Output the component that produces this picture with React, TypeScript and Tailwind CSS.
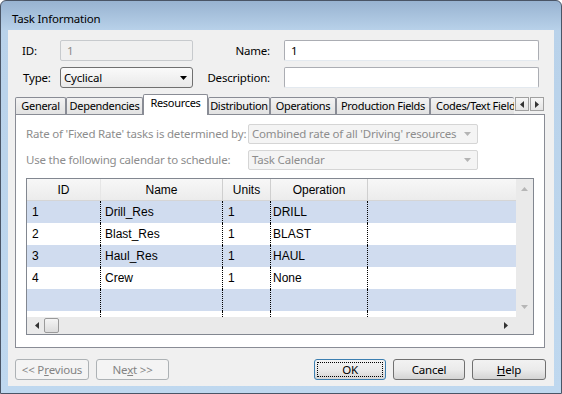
const ui = "font-['Noto_Sans',sans-serif] text-[11.5px] tracking-[-0.2px]";
const gridFont = "font-['Liberation_Sans',Arial,sans-serif] text-[12px] tracking-normal";

const rows = [
  { id: "1", name: "Drill_Res", units: "1", op: "DRILL" },
  { id: "2", name: "Blast_Res", units: "1", op: "BLAST" },
  { id: "3", name: "Haul_Res", units: "1", op: "HAUL" },
  { id: "4", name: "Crew", units: "1", op: "None" },
  { id: "", name: "", units: "", op: "" },
];

const tabs = [
  { label: "General", w: "w-[51px]" },
  { label: "Dependencies", w: "w-[77px]" },
  { label: "Resources", w: "w-[65px]", active: true },
  { label: "Distribution", w: "w-[62px]" },
  { label: "Operations", w: "w-[66px]" },
  { label: "Production Fields", w: "w-[94px]" },
  { label: "Codes/Text Fields", w: "w-[84px]", clip: true },
];

function Tab({ label, w, active, clip }: { label: string; w: string; active?: boolean; clip?: boolean }) {
  if (active) {
    return (
      <div className={`relative z-10 -mb-px h-[21px] ${w} shrink-0 whitespace-nowrap rounded-t-[2px] border border-b-0 border-[#898c95] bg-white text-center text-[11px] leading-[16px] tracking-[-0.3px]`}>
        {label}
      </div>
    );
  }
  return (
    <div className={`h-[17px] ${w} shrink-0 overflow-hidden whitespace-nowrap rounded-t-[2px] border border-b-0 border-[#898c95] bg-gradient-to-b from-[#f3f3f3] to-[#e2e2e2] text-[11px] leading-[15px] tracking-[-0.3px] ${clip ? "border-r-0 pl-[5px]" : "text-center"}`}>
      {label}
    </div>
  );
}

function Arrow({ dir, color }: { dir: "up" | "down" | "left" | "right"; color: string }) {
  const pts = {
    up: "0,4 7,4 3.5,0",
    down: "0,0 7,0 3.5,4",
    left: "4,0 4,7 0,3.5",
    right: "0,0 0,7 4,3.5",
  }[dir];
  const horiz = dir === "left" || dir === "right";
  return (
    <svg width={horiz ? 4 : 7} height={horiz ? 7 : 4} viewBox={horiz ? "0 0 4 7" : "0 0 7 4"}>
      <polygon points={pts} fill={color} />
    </svg>
  );
}

function Button({ children, w, disabled, primary }: { children: React.ReactNode; w: string; disabled?: boolean; primary?: boolean }) {
  if (disabled) {
    return (
      <div className={`flex h-[21px] ${w} items-center justify-center rounded-[3px] border border-[#adb2b5] bg-[#f4f4f4] text-[#838383]`}>
        {children}
      </div>
    );
  }
  return (
    <div className={`flex h-[21px] ${w} items-center justify-center rounded-[3px] border ${primary ? "border-[#3c7fb1]" : "border-[#707070]"} bg-gradient-to-b from-[#f2f2f2] via-[#ebebeb] to-[#d4d4d4] p-[2px]`}>
      <div className={`flex h-full w-full items-center justify-center ${primary ? "border border-dotted border-black" : ""}`}>
        {children}
      </div>
    </div>
  );
}

function DisabledCombo({ text }: { text: string }) {
  return (
    <div className="flex h-[20px] w-[230px] shrink-0 items-center justify-between rounded-[2px] border border-[#d5d5d5] bg-[#f4f4f4] pl-[3px] pr-[6px] text-[#8d8d8d]">
      <span className="whitespace-nowrap">{text}</span>
      <Arrow dir="down" color="#b4b4b4" />
    </div>
  );
}

export default function App() {
  return (
    <div className={`${ui} h-[394px] w-[562px] overflow-hidden bg-white text-black`}>
      <div className="flex h-[394px] w-[562px] flex-col rounded-t-[6px] border border-[#4a5566] bg-[linear-gradient(to_bottom,#98b3d1_0px,#b9d2ea_30px,#bfd8ef_100%)]">
        {/* title */}
        <div className="flex h-[29px] shrink-0 items-center pl-[11px] pt-[6px]">Task Information</div>

        {/* client */}
        <div className="mx-[7px] mb-[7px] flex flex-1 flex-col bg-[#f0f0f0]">
          <div className="mt-[10px] flex h-[21px] items-center pl-[14px]">
            <div className="w-[38px]">ID:</div>
            <div className="flex h-[21px] w-[133px] items-center rounded-[2px] border border-[#c7cacd] bg-[#f0f0f0] pl-[6px] text-[#8a8a8a]">1</div>
            <div className="w-[77px] text-right">Name:</div>
            <div className="ml-[14px] flex h-[21px] w-[255px] items-center rounded-[2px] border border-[#abadb3] border-b-[#e3e9ef] bg-white pl-[6px]">1</div>
          </div>

          <div className="mt-[6px] flex h-[21px] items-center pl-[14px]">
            <div className="w-[38px] pl-[1px]">Type:</div>
            <div className="flex h-[21px] w-[133px] items-center justify-between rounded-[3px] border border-[#707070] bg-gradient-to-b from-[#fafafa] to-[#e9e9e9] pl-[3px] pr-[5px]">
              <span>Cyclical</span>
              <Arrow dir="down" color="#000" />
            </div>
            <div className="w-[77px] text-right">Description:</div>
            <div className="ml-[14px] h-[21px] w-[255px] rounded-[2px] border border-[#abadb3] border-b-[#e3e9ef] bg-white"></div>
          </div>

          {/* tabs */}
          <div className="ml-[7px] mt-[5px] flex h-[21px] w-[530px] items-end">
            {tabs.map((t) => (
              <Tab key={t.label} label={t.label} w={t.w} active={t.active} clip={t.clip} />
            ))}
            <div className="mb-[3px] ml-[1px] flex h-[14px] gap-[1px]">
              <div className="flex w-[14px] items-center justify-center border border-[#a0a0a0] bg-gradient-to-b from-[#f6f6f6] to-[#e4e4e4]">
                <Arrow dir="left" color="#333" />
              </div>
              <div className="flex w-[14px] items-center justify-center border border-[#a0a0a0] bg-gradient-to-b from-[#f6f6f6] to-[#e4e4e4]">
                <Arrow dir="right" color="#333" />
              </div>
            </div>
          </div>

          {/* panel */}
          <div className="ml-[7px] flex h-[234px] w-[530px] flex-col border border-[#898c95] bg-white pl-[10px] pt-[9px] text-[#8d8d8d]">
            <div className="flex h-[20px] items-center">
              <div className="w-[222px] whitespace-nowrap">Rate of 'Fixed Rate' tasks is determined by:</div>
              <DisabledCombo text="Combined rate of all 'Driving' resources" />
            </div>
            <div className="mt-[6px] flex h-[20px] items-center">
              <div className="w-[222px] whitespace-nowrap">Use the following calendar to schedule:</div>
              <DisabledCombo text="Task Calendar" />
            </div>

            {/* grid */}
            <div className={`${gridFont} mt-[8px] flex h-[157px] w-[508px] flex-col border border-[#828790] text-black`}>
              <div className="flex h-[138px]">
                <div className="flex w-[489px] flex-col">
                  <div className="flex h-[22px] border-b border-[#d5d5d5] bg-gradient-to-b from-[#f7f7f7] to-[#ececec]">
                    <div className="flex w-[74px] items-center justify-center border-r border-[#e6e6e6]">ID</div>
                    <div className="flex w-[122px] items-center justify-center border-r border-[#cfcfcf]">Name</div>
                    <div className="flex w-[48px] items-center justify-center border-r border-[#cfcfcf]">Units</div>
                    <div className="flex w-[97px] items-center justify-center border-r border-[#cfcfcf]">Operation</div>
                    <div className="flex-1"></div>
                  </div>
                  {rows.map((r, i) => (
                    <div key={i} className={`flex h-[22px] ${i % 2 === 0 ? "bg-[#d0dcef]" : "bg-white"}`}>
                      <div className="flex w-[74px] items-center border-r border-dotted border-black pl-[5px]">{r.id}</div>
                      <div className="flex w-[122px] items-center border-r border-dotted border-black pl-[4px]">{r.name}</div>
                      <div className="flex w-[48px] items-center border-r border-dotted border-black pl-[5px]">{r.units}</div>
                      <div className="flex w-[97px] items-center border-r border-dotted border-black pl-[2px]">{r.op}</div>
                      <div className="flex-1"></div>
                    </div>
                  ))}
                  <div className="flex h-[6px] bg-white">
                    <div className="w-[74px] border-r border-dotted border-black"></div>
                    <div className="w-[122px] border-r border-dotted border-black"></div>
                    <div className="w-[48px] border-r border-dotted border-black"></div>
                    <div className="w-[97px] border-r border-dotted border-black"></div>
                  </div>
                </div>
                <div className="flex w-[17px] flex-col items-center justify-between bg-[#eaeaea] py-[8px]">
                  <Arrow dir="up" color="#b6b6b6" />
                  <Arrow dir="down" color="#b6b6b6" />
                </div>
              </div>
              <div className="flex h-[17px]">
                <div className="flex w-[489px] items-center bg-[#eaeaea] pl-[8px] pr-[8px]">
                  <Arrow dir="left" color="#333" />
                  <div className="ml-[5px] h-[15px] w-[15px] rounded-[2px] border border-[#9a9a9a] bg-gradient-to-b from-[#f4f4f4] to-[#dcdcdc]"></div>
                  <div className="flex-1"></div>
                  <Arrow dir="right" color="#333" />
                </div>
                <div className="w-[17px] bg-[#eaeaea]"></div>
              </div>
            </div>
          </div>

          {/* buttons */}
          <div className="ml-[7px] mr-[8px] mt-[11px] flex">
            <div className="flex gap-[7px]">
              <Button w="w-[74px]" disabled>
                &lt;&lt; P<span className="underline">r</span>evious
              </Button>
              <Button w="w-[73px]" disabled>
                Ne<span className="underline">x</span>t &gt;&gt;
              </Button>
            </div>
            <div className="ml-auto flex gap-[7px]">
              <Button w="w-[72px]" primary>OK</Button>
              <Button w="w-[72px]">Cancel</Button>
              <Button w="w-[74px]">
                <span className="underline">H</span>elp
              </Button>
            </div>
          </div>
        </div>
      </div>
    </div>
  );
}
